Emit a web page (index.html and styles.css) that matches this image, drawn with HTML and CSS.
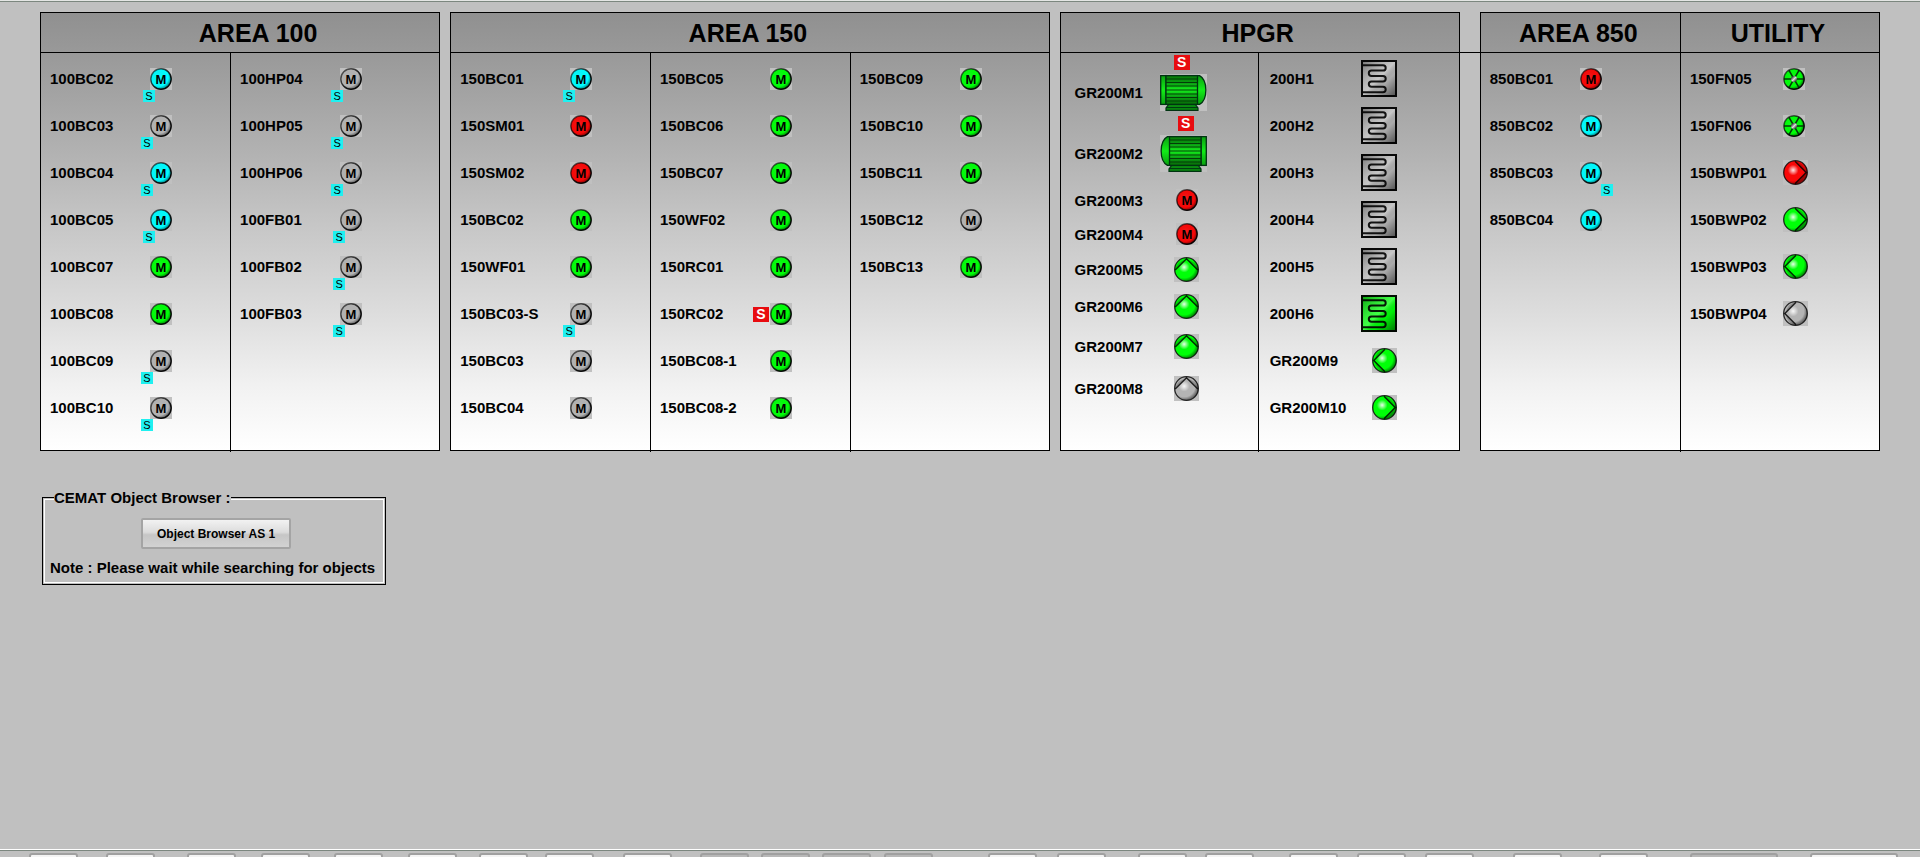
FILE: index.html
```html
<!DOCTYPE html>
<html lang="en">
<head>
<meta charset="utf-8">
<title>Object overview</title>
<link rel="stylesheet" href="styles.css">
</head>
<body>
<svg class="defs" width="0" height="0" aria-hidden="true">
  <defs>
    <linearGradient id="edge" x1="0" y1="0" x2="1" y2="1">
      <stop offset="0.2" stop-color="#000" stop-opacity="0.6"/>
      <stop offset="0.75" stop-color="#000" stop-opacity="0.95"/>
    </linearGradient>
    <radialGradient id="disc" cx="0.42" cy="0.42" r="0.62">
      <stop offset="0" stop-color="#fff" stop-opacity="0.1"/>
      <stop offset="0.7" stop-color="#000" stop-opacity="0"/>
      <stop offset="1" stop-color="#000" stop-opacity="0.6"/>
    </radialGradient>
    <radialGradient id="gloss" cx="0.4" cy="0.4" r="0.65">
      <stop offset="0" stop-color="#fff" stop-opacity="0.9"/>
      <stop offset="0.35" stop-color="#fff" stop-opacity="0"/>
      <stop offset="0.7" stop-color="#000" stop-opacity="0"/>
      <stop offset="1" stop-color="#000" stop-opacity="0.6"/>
    </radialGradient>
    <linearGradient id="barrel" x1="0" y1="0" x2="0" y2="1">
      <stop offset="0" stop-color="#087808"/>
      <stop offset="0.25" stop-color="#0a9a12"/>
      <stop offset="0.5" stop-color="#14f01c"/>
      <stop offset="0.75" stop-color="#0a9a12"/>
      <stop offset="1" stop-color="#076a07"/>
    </linearGradient>
    <linearGradient id="cap" x1="0" y1="0" x2="0" y2="1">
      <stop offset="0" stop-color="#0aa010"/>
      <stop offset="0.5" stop-color="#12ec18"/>
      <stop offset="1" stop-color="#0aa010"/>
    </linearGradient>
    <linearGradient id="plate" x1="0" y1="0" x2="1" y2="1">
      <stop offset="0" stop-color="#000" stop-opacity="0.4"/>
      <stop offset="0.5" stop-color="#fff" stop-opacity="0.25"/>
      <stop offset="0.65" stop-color="#000" stop-opacity="0.05"/>
      <stop offset="1" stop-color="#000" stop-opacity="0.6"/>
    </linearGradient>
    <linearGradient id="hub" x1="0" y1="0" x2="1" y2="1">
      <stop offset="0.2" stop-color="#444"/>
      <stop offset="0.5" stop-color="#ddd"/>
      <stop offset="0.8" stop-color="#444"/>
    </linearGradient>
  </defs>
  <symbol id="motor" viewBox="0 0 22 22">
    <circle cx="11" cy="11" r="10.3" fill="currentColor"/>
    <circle cx="11" cy="11" r="10.3" fill="url(#disc)"/>
    <circle cx="11" cy="11" r="10.2" fill="none" stroke="url(#edge)" stroke-width="1.4"/>
  </symbol>
  <symbol id="ball" viewBox="0 0 25 25">
    <circle cx="12.5" cy="12.5" r="11.8" fill="currentColor"/>
    <circle cx="12.5" cy="12.5" r="11.8" fill="url(#gloss)"/>
    <circle cx="12.5" cy="12.5" r="11.8" fill="none" stroke="#000" stroke-opacity="0.8" stroke-width="1.3"/>
  </symbol>
  <symbol id="arrow" viewBox="0 0 25 25">
    <path d="M1 13A11.6 11.6 0 0 1 24 13L12.5 1.8Z" fill="#000" fill-opacity="0.2"/>
    <path d="M1.2 13 12.5 1.8 23.8 13" fill="none" stroke="#000" stroke-opacity="0.8" stroke-width="1.5"/>
  </symbol>
  <symbol id="pump-up" viewBox="0 0 25 25"><use href="#ball"/><use href="#arrow"/></symbol>
  <symbol id="pump-right" viewBox="0 0 25 25"><use href="#ball"/><g transform="rotate(90 12.5 12.5)"><use href="#arrow"/></g></symbol>
  <symbol id="pump-left" viewBox="0 0 25 25"><use href="#ball"/><g transform="rotate(-90 12.5 12.5)"><use href="#arrow"/></g></symbol>
  <symbol id="fan" viewBox="0 0 22 22">
    <circle cx="11" cy="11" r="10.3" fill="currentColor"/>
    <circle cx="11" cy="11" r="10.3" fill="url(#disc)"/>
    <path d="M1 11H21M6 2.3 16 19.7M16 2.3 6 19.7" fill="none" stroke="#043a08" stroke-width="1.6"/>
    <circle cx="11" cy="11" r="10.2" fill="none" stroke="url(#edge)" stroke-width="1.4"/>
    <circle cx="11" cy="11" r="3" fill="url(#hub)"/>
  </symbol>
  <symbol id="drive" viewBox="0 0 47 37">
    <path d="M9 30H35L38 34V36.4H6V34Z" fill="#0a8a10" stroke="#031" stroke-width="1.2"/>
    <path d="M6 33.6H38" stroke="#031"/>
    <path d="M37 1.6H39.5C48 6 48 26 39.5 30.4H37Z" fill="url(#cap)" stroke="#031" stroke-width="1.3"/>
    <rect x="0.7" y="1.6" width="5.3" height="28.8" fill="url(#cap)" stroke="#031" stroke-width="1.3"/>
    <rect x="6" y="1.6" width="31.5" height="28.8" fill="url(#barrel)" stroke="#031" stroke-width="1.3"/>
    <path d="M6 5H37M6 8.5H37M6 12H37M6 16H37M6 20H37M6 23.5H37M6 27H37" stroke="#043a08" stroke-width="1.1"/>
  </symbol>
  <symbol id="drive-flip" viewBox="0 0 47 37"><g transform="translate(47 0) scale(-1 1)"><use href="#drive"/></g></symbol>
  <symbol id="heater" viewBox="0 0 36 37">
    <rect width="36" height="37" fill="currentColor"/>
    <rect width="36" height="37" fill="url(#plate)"/>
    <rect x="1" y="1" width="34" height="35" fill="none" stroke="#000" stroke-opacity="0.95" stroke-width="2"/>
    <path d="M2 5.2H22a2.7 2.7 0 0 1 0 5.4H10.5a2.7 2.7 0 0 0 0 5.4H22a2.7 2.7 0 0 1 0 5.4H10.5a2.7 2.7 0 0 0 0 5.4H22a2.7 2.7 0 0 1 0 5.4H2" fill="none" stroke="#000" stroke-opacity="0.9" stroke-width="2"/>
  </symbol>
</svg>

<main class="screen">
  <div class="panels">
    <section class="panel">
      <header class="heads heads-shift"><h2>AREA 100</h2></header>
      <div class="cols cols-100">
        <ul class="col">
          <li><span class="tag">100BC02</span><span class="slot"><svg class="i22 cyan"><use href="#motor"/><text x="11" y="16">M</text></svg><b class="sim near">S</b></span></li>
          <li><span class="tag">100BC03</span><span class="slot"><svg class="i22 grey"><use href="#motor"/><text x="11" y="16">M</text></svg><b class="sim">S</b></span></li>
          <li><span class="tag">100BC04</span><span class="slot"><svg class="i22 cyan"><use href="#motor"/><text x="11" y="16">M</text></svg><b class="sim">S</b></span></li>
          <li><span class="tag">100BC05</span><span class="slot"><svg class="i22 cyan"><use href="#motor"/><text x="11" y="16">M</text></svg><b class="sim near">S</b></span></li>
          <li><span class="tag">100BC07</span><span class="slot"><svg class="i22 green"><use href="#motor"/><text x="11" y="16">M</text></svg></span></li>
          <li><span class="tag">100BC08</span><span class="slot"><svg class="i22 green"><use href="#motor"/><text x="11" y="16">M</text></svg></span></li>
          <li><span class="tag">100BC09</span><span class="slot"><svg class="i22 grey"><use href="#motor"/><text x="11" y="16">M</text></svg><b class="sim">S</b></span></li>
          <li><span class="tag">100BC10</span><span class="slot"><svg class="i22 grey"><use href="#motor"/><text x="11" y="16">M</text></svg><b class="sim">S</b></span></li>
        </ul>
        <ul class="col">
          <li><span class="tag">100HP04</span><span class="slot"><svg class="i22 grey"><use href="#motor"/><text x="11" y="16">M</text></svg><b class="sim">S</b></span></li>
          <li><span class="tag">100HP05</span><span class="slot"><svg class="i22 grey"><use href="#motor"/><text x="11" y="16">M</text></svg><b class="sim">S</b></span></li>
          <li><span class="tag">100HP06</span><span class="slot"><svg class="i22 grey"><use href="#motor"/><text x="11" y="16">M</text></svg><b class="sim">S</b></span></li>
          <li><span class="tag">100FB01</span><span class="slot"><svg class="i22 grey"><use href="#motor"/><text x="11" y="16">M</text></svg><b class="sim near">S</b></span></li>
          <li><span class="tag">100FB02</span><span class="slot"><svg class="i22 grey"><use href="#motor"/><text x="11" y="16">M</text></svg><b class="sim near">S</b></span></li>
          <li><span class="tag">100FB03</span><span class="slot"><svg class="i22 grey"><use href="#motor"/><text x="11" y="16">M</text></svg><b class="sim near">S</b></span></li>
        </ul>
      </div>
    </section>

    <section class="panel panel-wide">
      <header class="heads"><h2>AREA 150</h2></header>
      <div class="cols cols-150">
        <ul class="col tags-wide">
          <li><span class="tag">150BC01</span><span class="slot"><svg class="i22 cyan"><use href="#motor"/><text x="11" y="16">M</text></svg><b class="sim near">S</b></span></li>
          <li><span class="tag">150SM01</span><span class="slot"><svg class="i22 red"><use href="#motor"/><text x="11" y="16">M</text></svg></span></li>
          <li><span class="tag">150SM02</span><span class="slot"><svg class="i22 red"><use href="#motor"/><text x="11" y="16">M</text></svg></span></li>
          <li><span class="tag">150BC02</span><span class="slot"><svg class="i22 green"><use href="#motor"/><text x="11" y="16">M</text></svg></span></li>
          <li><span class="tag">150WF01</span><span class="slot"><svg class="i22 green"><use href="#motor"/><text x="11" y="16">M</text></svg></span></li>
          <li><span class="tag">150BC03-S</span><span class="slot"><svg class="i22 grey"><use href="#motor"/><text x="11" y="16">M</text></svg><b class="sim near">S</b></span></li>
          <li><span class="tag">150BC03</span><span class="slot"><svg class="i22 grey"><use href="#motor"/><text x="11" y="16">M</text></svg></span></li>
          <li><span class="tag">150BC04</span><span class="slot"><svg class="i22 grey"><use href="#motor"/><text x="11" y="16">M</text></svg></span></li>
        </ul>
        <ul class="col tags-wide">
          <li><span class="tag">150BC05</span><span class="slot"><svg class="i22 green"><use href="#motor"/><text x="11" y="16">M</text></svg></span></li>
          <li><span class="tag">150BC06</span><span class="slot"><svg class="i22 green"><use href="#motor"/><text x="11" y="16">M</text></svg></span></li>
          <li><span class="tag">150BC07</span><span class="slot"><svg class="i22 green"><use href="#motor"/><text x="11" y="16">M</text></svg></span></li>
          <li><span class="tag">150WF02</span><span class="slot"><svg class="i22 green"><use href="#motor"/><text x="11" y="16">M</text></svg></span></li>
          <li><span class="tag">150RC01</span><span class="slot"><svg class="i22 green"><use href="#motor"/><text x="11" y="16">M</text></svg></span></li>
          <li><span class="tag">150RC02</span><span class="slot"><svg class="i22 green"><use href="#motor"/><text x="11" y="16">M</text></svg><b class="stop stop-side">S</b></span></li>
          <li><span class="tag">150BC08-1</span><span class="slot"><svg class="i22 green"><use href="#motor"/><text x="11" y="16">M</text></svg></span></li>
          <li><span class="tag">150BC08-2</span><span class="slot"><svg class="i22 green"><use href="#motor"/><text x="11" y="16">M</text></svg></span></li>
        </ul>
        <ul class="col">
          <li><span class="tag">150BC09</span><span class="slot"><svg class="i22 green"><use href="#motor"/><text x="11" y="16">M</text></svg></span></li>
          <li><span class="tag">150BC10</span><span class="slot"><svg class="i22 green"><use href="#motor"/><text x="11" y="16">M</text></svg></span></li>
          <li><span class="tag">150BC11</span><span class="slot"><svg class="i22 green"><use href="#motor"/><text x="11" y="16">M</text></svg></span></li>
          <li><span class="tag">150BC12</span><span class="slot"><svg class="i22 grey"><use href="#motor"/><text x="11" y="16">M</text></svg></span></li>
          <li><span class="tag">150BC13</span><span class="slot"><svg class="i22 green"><use href="#motor"/><text x="11" y="16">M</text></svg></span></li>
        </ul>
      </div>
    </section>

    <section class="panel">
      <header class="heads"><h2>HPGR</h2></header>
      <div class="cols cols-hpgr">
        <ul class="col col-drives">
          <li><span class="tag">GR200M1</span><span class="slot"><svg class="drive"><use href="#drive"/></svg><b class="stop stop-top">S</b></span></li>
          <li><span class="tag">GR200M2</span><span class="slot"><svg class="drive"><use href="#drive-flip"/></svg><b class="stop stop-top stop-shift">S</b></span></li>
          <li><span class="tag">GR200M3</span><span class="slot"><svg class="i22 red"><use href="#motor"/><text x="11" y="16">M</text></svg></span></li>
          <li><span class="tag">GR200M4</span><span class="slot"><svg class="i22 red"><use href="#motor"/><text x="11" y="16">M</text></svg></span></li>
          <li><span class="tag">GR200M5</span><span class="slot"><svg class="i25 green"><use href="#pump-up"/></svg></span></li>
          <li><span class="tag">GR200M6</span><span class="slot"><svg class="i25 green"><use href="#pump-up"/></svg></span></li>
          <li><span class="tag">GR200M7</span><span class="slot"><svg class="i25 green"><use href="#pump-up"/></svg></span></li>
          <li><span class="tag">GR200M8</span><span class="slot"><svg class="i25 grey"><use href="#pump-up"/></svg></span></li>
        </ul>
        <ul class="col col-heaters">
          <li><span class="tag">200H1</span><span class="slot"><svg class="heater grey"><use href="#heater"/></svg></span></li>
          <li><span class="tag">200H2</span><span class="slot"><svg class="heater grey"><use href="#heater"/></svg></span></li>
          <li><span class="tag">200H3</span><span class="slot"><svg class="heater grey"><use href="#heater"/></svg></span></li>
          <li><span class="tag">200H4</span><span class="slot"><svg class="heater grey"><use href="#heater"/></svg></span></li>
          <li><span class="tag">200H5</span><span class="slot"><svg class="heater grey"><use href="#heater"/></svg></span></li>
          <li><span class="tag">200H6</span><span class="slot"><svg class="heater green"><use href="#heater"/></svg></span></li>
          <li><span class="tag">GR200M9</span><span class="slot"><svg class="i25 green"><use href="#pump-left"/></svg></span></li>
          <li><span class="tag">GR200M10</span><span class="slot"><svg class="i25 green"><use href="#pump-right"/></svg></span></li>
        </ul>
      </div>
    </section>

    <section class="panel panel-linked">
      <header class="heads heads-split"><h2>AREA 850</h2><h2>UTILITY</h2></header>
      <div class="cols">
        <ul class="col tags-narrow">
          <li><span class="tag">850BC01</span><span class="slot"><svg class="i22 red"><use href="#motor"/><text x="11" y="16">M</text></svg></span></li>
          <li><span class="tag">850BC02</span><span class="slot"><svg class="i22 cyan"><use href="#motor"/><text x="11" y="16">M</text></svg></span></li>
          <li><span class="tag">850BC03</span><span class="slot"><svg class="i22 cyan"><use href="#motor"/><text x="11" y="16">M</text></svg><b class="sim right">S</b></span></li>
          <li><span class="tag">850BC04</span><span class="slot"><svg class="i22 cyan"><use href="#motor"/><text x="11" y="16">M</text></svg></span></li>
        </ul>
        <ul class="col col-utility">
          <li><span class="tag">150FN05</span><span class="slot"><svg class="i22 green"><use href="#fan"/></svg></span></li>
          <li><span class="tag">150FN06</span><span class="slot"><svg class="i22 green"><use href="#fan"/></svg></span></li>
          <li><span class="tag">150BWP01</span><span class="slot"><svg class="i25 red"><use href="#pump-right"/></svg></span></li>
          <li><span class="tag">150BWP02</span><span class="slot"><svg class="i25 green"><use href="#pump-right"/></svg></span></li>
          <li><span class="tag">150BWP03</span><span class="slot"><svg class="i25 green"><use href="#pump-left"/></svg></span></li>
          <li><span class="tag">150BWP04</span><span class="slot"><svg class="i25 grey"><use href="#pump-left"/></svg></span></li>
        </ul>
      </div>
    </section>
  </div>

  <fieldset class="browser">
    <legend>CEMAT Object Browser :</legend>
    <button type="button" class="open">Object Browser AS 1</button>
    <p>Note : Please wait while searching for objects</p>
  </fieldset>
</main>

<nav class="keys">
  <button type="button"></button><button type="button"></button><button type="button"></button><button type="button"></button>
  <button type="button"></button><button type="button"></button><button type="button"></button><button type="button"></button>
  <button type="button"></button><button type="button" class="off"></button><button type="button" class="off"></button><button type="button" class="off"></button>
  <button type="button" class="off"></button><button type="button"></button><button type="button"></button><button type="button"></button>
  <button type="button"></button><button type="button"></button><button type="button"></button><button type="button"></button>
  <button type="button"></button><button type="button"></button><button type="button" class="off long"></button><button type="button" class="long"></button>
</nav>
</body>
</html>
```
FILE: styles.css
```css
* { box-sizing: border-box; }

body {
  margin: 0;
  height: 100vh;
  overflow: hidden;
  display: flex;
  flex-direction: column;
  background: #c0c0c0;
  color: #000;
  font: bold 15px/17px "Liberation Sans", Arial, sans-serif;
}

.defs { position: absolute; }

.screen {
  flex: 1;
  min-height: 0;
  padding: 10px 40px 0;
  border-top: 1px solid #7c877f;
  margin-top: 1px;
  box-shadow: 0 -1px 0 #e4e6e4;
}

/* Area panels */
.panels { display: flex; gap: 10px; }

.panel {
  flex: 2 2 0;
  min-width: 0;
  display: flex;
  flex-direction: column;
  border: 1px solid #000;
  background: linear-gradient(#909090, #9c9c9c 12%, #b3b3b3 33%, #c8c8c8 50%, #dcdcdc 68%, #f1f1f1 85%, #fff);
}
.panel-wide { flex-grow: 3; }
.panel-linked { margin-left: 10px; position: relative; }
.panel-linked::before {
  content: "";
  position: absolute;
  top: 39px;
  left: -21px;
  width: 20px;
  height: 1px;
  background: #000;
}

.heads { display: grid; border-bottom: 1px solid #000; }
.heads-shift { padding-left: 40px; }
.heads-split { grid-template-columns: 1fr 1fr; }
.heads-split h2 + h2 { border-left: 1px solid #000; }
.heads h2 {
  margin: 0;
  padding: 1px 4px 0 0;
  font-size: 25px;
  line-height: 38px;
  text-align: center;
}

.cols { flex: 1; display: grid; grid-template-columns: 1fr 1fr; }
.cols-100 { grid-template-columns: 189fr 209fr; }
.cols-150 { grid-template-columns: 199fr 200fr 199fr; }
.cols-hpgr { grid-template-columns: 197fr 201fr; }

.col {
  display: grid;
  grid-template-columns: 100px 22px;
  grid-auto-rows: 47px;
  align-content: start;
  margin: 0 0 -1px;
  padding: 2px 0 20px 9px;
  list-style: none;
}
.col + .col { border-left: 1px solid #000; margin-bottom: -2px; }
.col li { display: grid; grid-column: 1 / -1; grid-template-columns: subgrid; align-items: center; }
.tags-wide { grid-template-columns: 110px 22px; }
.tags-narrow { grid-template-columns: 90px 22px; }
.col-utility { grid-template-columns: 93px 25px; }
.col-heaters { grid-template-columns: 91px 36px; padding-left: 11px; }
.col-heaters .slot { justify-content: end; }
.col-drives {
  grid-template-columns: 85px 54px;
  grid-template-rows: 61px 60px 34px 34px 36px 38px 42px 42px;
  padding: 9px 0 0 14px;
}
.col-drives .slot { justify-content: center; }
.col-drives .drive { margin-right: auto; }

.tag { white-space: nowrap; }
.slot { position: relative; display: flex; }

/* Device symbols */
.slot svg { display: block; flex: none; background: #c0c0c0; }
.i22 { width: 22px; height: 22px; }
.i25 { width: 25px; height: 25px; }
.drive { width: 47px; height: 37px; }
.heater { width: 36px; height: 37px; }
.i22 text { font-size: 13px; fill: #000; text-anchor: middle; }
.cyan { color: #00fcff; }
.grey { color: #b4b4b4; }
.green { color: #00ff08; }
.red { color: #f80808; }

/* State flags laid over the symbols */
.sim, .stop { position: absolute; text-align: center; }
.sim {
  top: 22px;
  left: -9px;
  width: 12px;
  height: 12px;
  background: #1ff0f0;
  font-size: 11px;
  font-weight: normal;
  line-height: 12px;
}
.sim.near { left: -7px; }
.sim.right { left: 21px; }
.stop {
  width: 16px;
  height: 15px;
  background: #e80c10;
  color: #fff;
  font-size: 14px;
  line-height: 15px;
}
.stop-side { top: 4px; left: -17px; }
.stop-top { top: -19px; left: 14px; }
.stop-shift { left: 18px; }

/* Object browser box */
.browser {
  width: fit-content;
  margin: 38px 0 0 2px;
  padding: 12px 10px 8px 7px;
  border: 1px solid #000;
  box-shadow: inset 0 0 0 1px #c0c0c0, inset 0 0 0 2px #fff;
}
.browser legend { margin-left: 4px; padding: 0 1px 0 0; background: #c0c0c0; }
.browser p { margin: 10px 0 0; }
.open {
  display: block;
  margin: 0 auto 0 91px;
  height: 31px;
  padding: 0 14px;
  border: 2px solid #a4a4a4;
  border-radius: 2px;
  background: linear-gradient(#f2f2f2, #dcdcdc 45%, #c6c6c6 55%, #d2d2d2);
  color: #000;
  font: bold 12px/14px "Liberation Sans", Arial, sans-serif;
}

/* Key bar at the lower edge of the window */
.keys {
  flex: none;
  height: 8px;
  overflow: hidden;
  display: grid;
  grid-template-columns: 77fr 81fr 74fr 73fr 74fr 71fr 66fr 78fr 77fr 61fr 61fr 62fr 104fr 69fr 81fr 67fr 84fr 68fr 68fr 88fr 86fr 91fr 120fr 88fr;
  padding: 3px 22px 0 29px;
  border-top: 1px solid #fff;
  box-shadow: inset 0 1px 0 #7c877f;
}
.keys button {
  width: 49px;
  height: 30px;
  padding: 0;
  border: 2px solid #a0a0a0;
  border-radius: 3px;
  background: #f4f4f4;
}
.keys .off { background: #b8b8b8; }
.keys .long { width: 88px; }
```
